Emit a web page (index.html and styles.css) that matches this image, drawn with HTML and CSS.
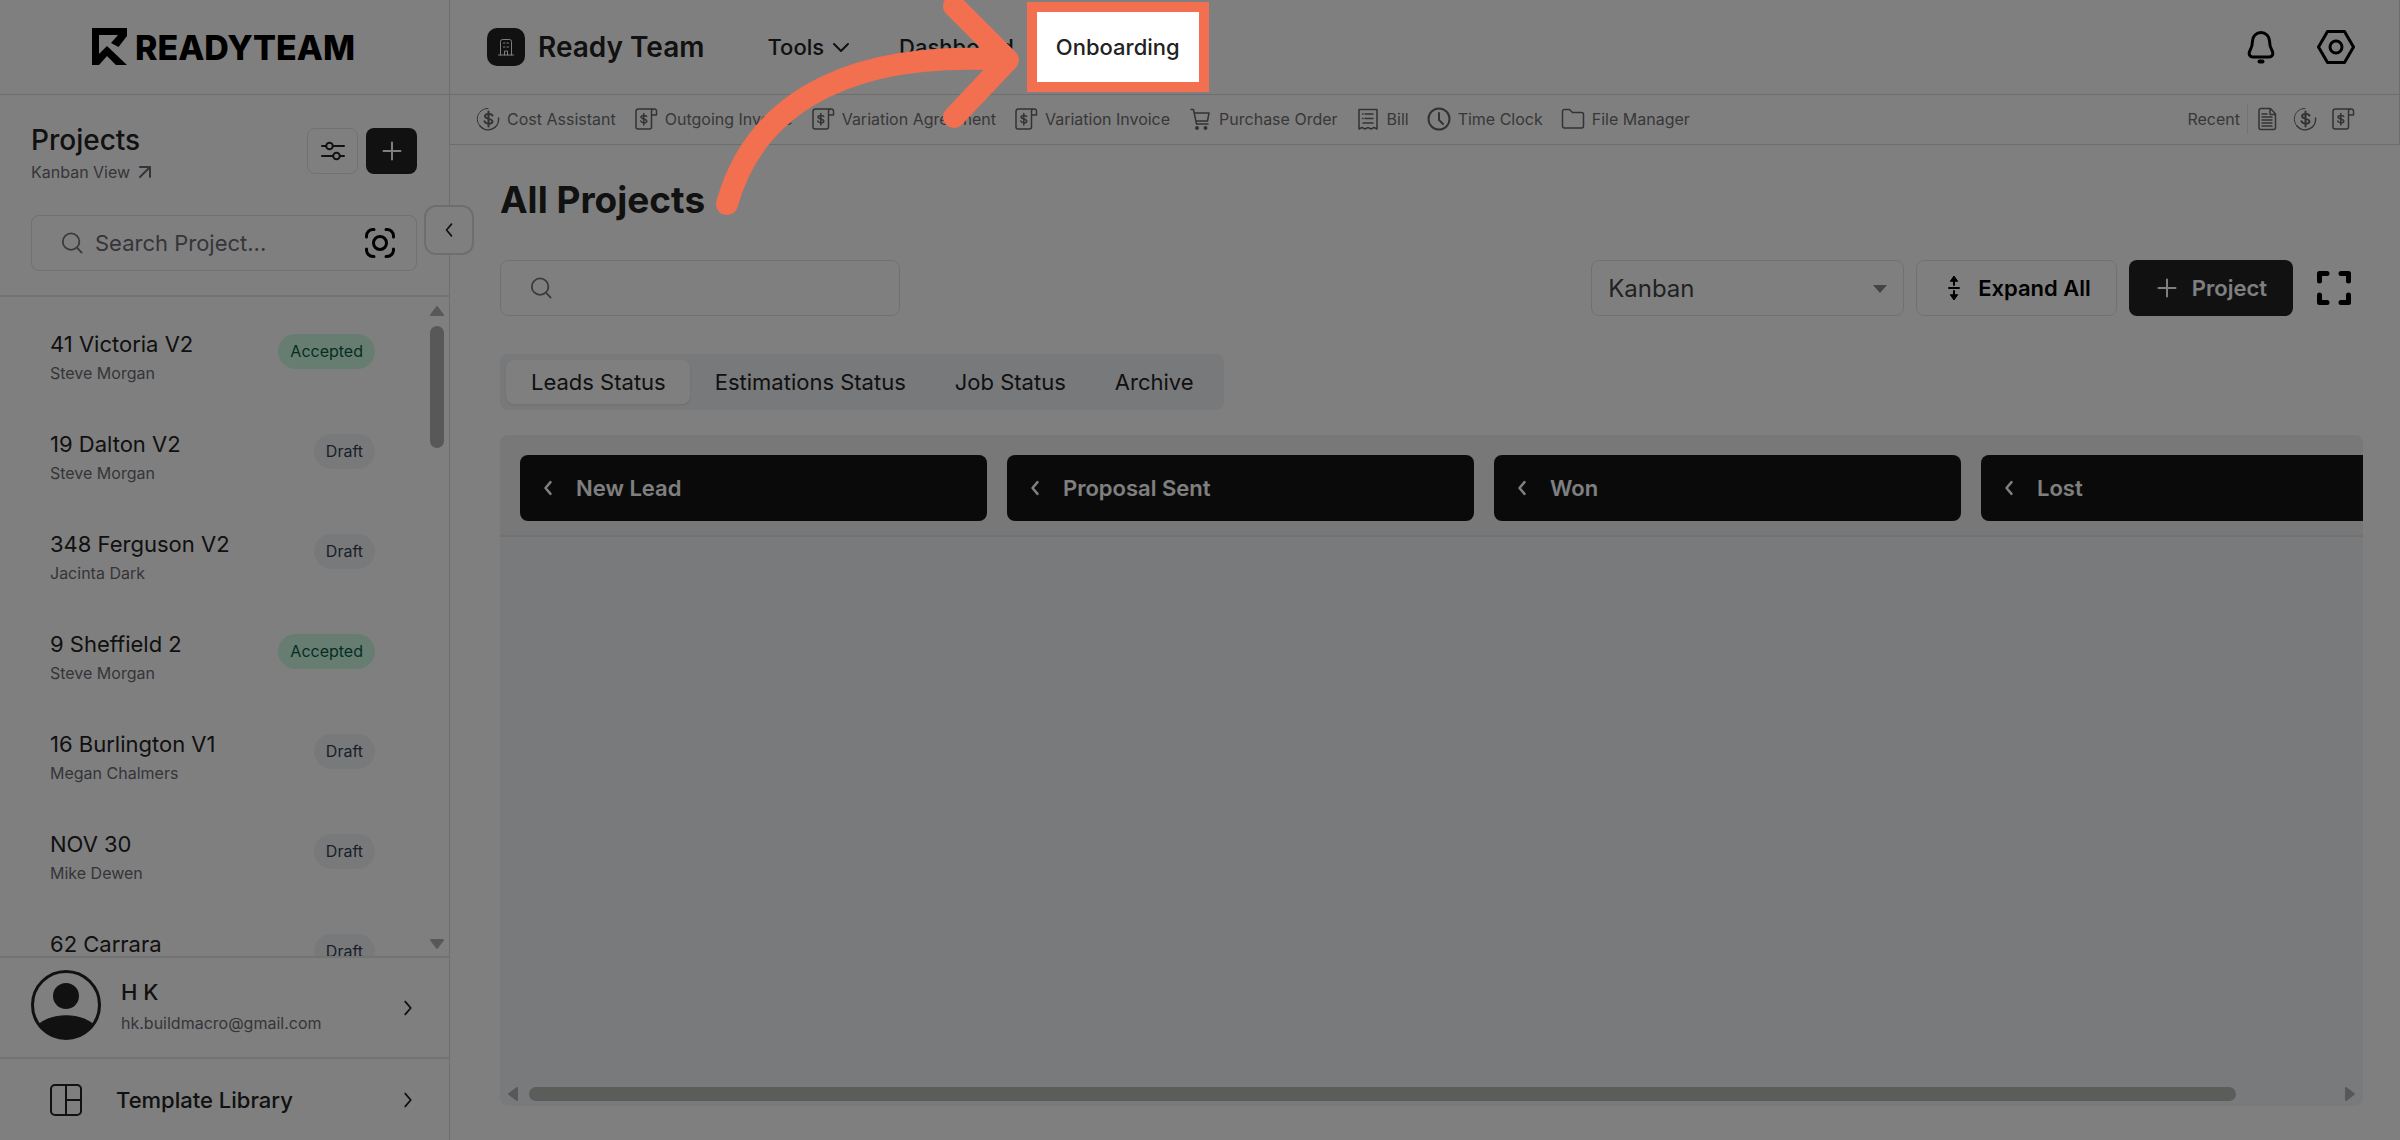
FILE: index.html
```html
<!DOCTYPE html>
<html lang="en">
<head>
  <meta charset="UTF-8" />
  <meta name="viewport" content="width=device-width, initial-scale=1.0"/>
  <title>Ready Team - All Projects</title>
  <link rel="stylesheet" href="styles.css">
</head>
<body>

  <!-- Shared icons -->
  <svg class="sprite" aria-hidden="true">
    <symbol id="i-search" viewBox="0 0 24 24"><circle cx="11" cy="10.500" r="9"/><path d="M17.500 17l5 5.500"/></symbol>
    <symbol id="i-plus" viewBox="0 0 24 24"><path d="M12 3.500v17M3.500 12h17"/></symbol>
    <symbol id="i-left" viewBox="0 0 24 24"><path d="M15 5l-6 7 6 7"/></symbol>
    <symbol id="i-right" viewBox="0 0 24 24"><path d="M9 5l6 7-6 7"/></symbol>
    <symbol id="i-cost" viewBox="0 0 24 24">
      <path d="M12 1.500A10.500 10.500 0 0 0 4 19" stroke-width="1" stroke-dasharray="4 1"/>
      <path d="M4 19a10.500 10.500 0 0 0 18.500-8"/>
      <path d="M12.500 4.500v15M16.500 8.500c-1-2-7.500-2.200-7.500.8 0 3.200 7.500 1.900 7.500 5.200 0 3-7 2.800-8-.2" stroke-width="2"/>
    </symbol>
    <symbol id="i-invoice" viewBox="0 0 24 24">
      <path d="M20 2H4.500A2.500 2.500 0 0 0 2 4.500V20a2 2 0 0 0 2 2h11.500a2 2 0 0 0 2-2V4.500A2.200 2.200 0 0 1 20 2a2 2 0 0 1 2.500 2v4h-5"/>
      <path d="M9.800 6.500v11.500M12.700 9.500c-.8-1.500-5.700-1.600-5.700.6 0 2.400 5.800 1.500 5.800 4.100 0 2.300-5.400 2.100-6.100-.3"/>
    </symbol>
  </svg>

  <div class="app">
    <aside class="sidebar">
      <div class="logo">
        <svg width="35" height="38" viewBox="0 0 35 38"><path d="M0 0H35V8L26.500 19 19 15 26 7H7V26L15 18 35 37H24L15 28 7 37H0Z" fill="#000"/></svg>
        <span>READYTEAM</span>
      </div>

      <div class="side-top">
        <div class="side-title">
          <div>
            <h2>Projects</h2>
            <a href="#" class="view-link">Kanban View
              <svg width="14" height="14" viewBox="0 0 14 14"><path d="M2 2h10v10M12 2L2 12"/></svg>
            </a>
          </div>
          <div class="side-actions">
            <button class="btn-filter" aria-label="Filter">
              <svg width="24" height="24" viewBox="0 0 24 24"><path d="M1 7h4M12 7h11M1 17h11M19 17h4"/><circle cx="8.500" cy="7" r="3.300"/><circle cx="15.500" cy="17" r="3.300"/></svg>
            </button>
            <button class="btn-add" aria-label="Add project"><svg width="24" height="24"><use href="#i-plus"/></svg></button>
          </div>
        </div>
        <div class="search side-search">
          <svg width="22" height="22" class="i-grey"><use href="#i-search"/></svg>
          <input type="text" placeholder="Search Project..." aria-label="Search project">
          <svg class="scan" width="30" height="30" viewBox="0 0 30 30"><path d="M1.500 9V8A6.500 6.500 0 0 1 8 1.500H9M21 1.500h1A6.500 6.500 0 0 1 28.500 8v1M28.500 21v1a6.500 6.500 0 0 1-6.500 6.500h-1M9 28.500H8A6.500 6.500 0 0 1 1.500 22v-1"/><circle cx="15" cy="15" r="6.500"/></svg>
        </div>
      </div>

      <button class="collapse" aria-label="Collapse sidebar"><svg width="20" height="20"><use href="#i-left"/></svg></button>

      <div class="list-wrap">
        <ul class="project-list">
          <li><div><h3>41 Victoria V2</h3><p>Steve Morgan</p></div><span class="badge accepted">Accepted</span></li>
          <li><div><h3>19 Dalton V2</h3><p>Steve Morgan</p></div><span class="badge">Draft</span></li>
          <li><div><h3>348 Ferguson V2</h3><p>Jacinta Dark</p></div><span class="badge">Draft</span></li>
          <li><div><h3>9 Sheffield 2</h3><p>Steve Morgan</p></div><span class="badge accepted">Accepted</span></li>
          <li><div><h3>16 Burlington V1</h3><p>Megan Chalmers</p></div><span class="badge">Draft</span></li>
          <li><div><h3>NOV 30</h3><p>Mike Dewen</p></div><span class="badge">Draft</span></li>
          <li><div><h3>62 Carrara</h3></div><span class="badge">Draft</span></li>
        </ul>
        <div class="vscroll">
          <svg width="16" height="12" viewBox="0 0 16 12"><path d="M8 2l6 8H2z"/></svg>
          <div class="vtrack"><div class="vthumb"></div></div>
          <svg width="16" height="12" viewBox="0 0 16 12"><path d="M8 10l6-8H2z"/></svg>
        </div>
      </div>

      <a href="#" class="user">
        <svg class="avatar" width="70" height="70" viewBox="0 0 70 70">
          <circle cx="35" cy="35" r="33.500" fill="none" stroke="#222" stroke-width="3"/>
          <circle cx="35" cy="26" r="13" fill="#222" stroke="none"/>
          <path d="M8 54C22 43 48 43 62 54A33.500 33.500 0 0 1 8 54Z" fill="#222" stroke="#222" stroke-width="1"/>
        </svg>
        <div class="user-info"><strong>H K</strong><span>hk.buildmacro@gmail.com</span></div>
        <svg width="22" height="22"><use href="#i-right"/></svg>
      </a>

      <a href="#" class="template">
        <svg width="34" height="34" viewBox="0 0 34 34"><rect x="2" y="2" width="30" height="30" rx="4"/><path d="M17 2v30M17 17h15"/></svg>
        <span>Template Library</span>
        <svg width="22" height="22"><use href="#i-right"/></svg>
      </a>
    </aside>

    <div class="main">
      <header class="topbar">
        <div class="brand">
          <span class="brand-icon">
            <svg width="18" height="18" viewBox="0 0 18 18"><path d="M1.500 17h15M3.500 17V3.500a2 2 0 0 1 2-2h7a2 2 0 0 1 2 2V17M7.500 17v-4h3v4M6.500 5h1.500M10 5h1.500M6.500 9h1.500M10 9h1.500"/></svg>
          </span>
          <h1>Ready Team</h1>
        </div>
        <nav>
          <button class="nav-item">Tools
            <svg width="18" height="18" viewBox="0 0 18 18"><path d="M2 6l7 7 7-7"/></svg>
          </button>
          <a href="#" class="nav-item">Dashboard</a>
          <a href="#" class="nav-item highlight">Onboarding
            <svg class="arrow" width="320" height="220" viewBox="0 0 320 220"><path d="M12 204C36 118 114 48 293 60M239 6L293 60L239 117"/></svg>
          </a>
        </nav>
        <div class="top-icons">
          <button aria-label="Notifications">
            <svg width="28" height="34" viewBox="0 0 28 34"><path d="M14 2.500a8.500 8.500 0 0 0-8.500 8.500c0 4.500-.8 6.500-2.500 9.500-2 3.800 0 6.500 3 6.500h16c3 0 5-2.700 3-6.500-1.700-3-2.500-5-2.500-9.500A8.500 8.500 0 0 0 14 2.500Z"/><path d="M12.500 31.500h3" stroke-width="4"/></svg>
          </button>
          <button aria-label="Settings">
            <svg width="38" height="34" viewBox="0 0 38 34"><path d="M10.500 1.500h17L36.500 17l-9 15.500h-17L1.500 17z"/><circle cx="19" cy="17" r="6"/></svg>
          </button>
        </div>
      </header>

      <div class="toolbar">
        <a href="#"><svg><use href="#i-cost"/></svg>Cost Assistant</a>
        <a href="#"><svg><use href="#i-invoice"/></svg>Outgoing Invoice</a>
        <a href="#"><svg><use href="#i-invoice"/></svg>Variation Agreement</a>
        <a href="#"><svg><use href="#i-invoice"/></svg>Variation Invoice</a>
        <a href="#"><svg viewBox="0 0 24 24"><path d="M3 2.500h2.500l3 14.500h11.500M6.500 6H21l-1.500 8H8"/><circle cx="9" cy="21" r="1.200" fill="#444"/><circle cx="17.500" cy="21" r="1.200" fill="#444"/></svg>Purchase Order</a>
        <a href="#"><svg viewBox="0 0 24 24"><path d="M3 22V2.500h18V22l-3-1.500L15 22l-3-1.500L9 22l-3-1.500zM9 7h8M6.500 7h.5M9 11.500h8M6.500 11.500h.5M7 16h10"/></svg>Bill</a>
        <a href="#"><svg class="clock" viewBox="0 0 24 24"><circle cx="12" cy="12" r="10.500"/><path d="M12 6v7l4 4"/></svg>Time Clock</a>
        <a href="#"><svg viewBox="0 0 24 24"><path d="M1.500 4.500a2 2 0 0 1 2-2h5l3 3h9a2 2 0 0 1 2 2v11.500a2 2 0 0 1-2 2h-17a2 2 0 0 1-2-2z"/></svg>File Manager</a>
        <div class="recent">
          <span>Recent</span>
          <a href="#" aria-label="Document"><svg viewBox="0 0 24 24"><path d="M6 1.500h9.500L20.500 7v13.500a2 2 0 0 1-2 2H6a2 2 0 0 1-2-2V3.500a2 2 0 0 1 2-2zM15 2v5.500h5M7 7h5M7 10h10M7 13h10M7 16h10M7 19h10"/></svg></a>
          <a href="#" aria-label="Cost Assistant"><svg><use href="#i-cost"/></svg></a>
          <a href="#" aria-label="Invoice"><svg><use href="#i-invoice"/></svg></a>
        </div>
      </div>

      <main class="content">
        <h2 class="page-title">All Projects</h2>

        <div class="controls">
          <div class="search main-search">
            <svg width="22" height="22" class="i-grey"><use href="#i-search"/></svg>
            <input type="text" aria-label="Search">
          </div>
          <div class="select-wrap">
            <select aria-label="View"><option>Kanban</option><option>List</option></select>
          </div>
          <button class="btn-expand">
            <svg width="24" height="26" viewBox="0 0 24 26"><path d="M7 13h10M12 10V3M12 16v7"/><path d="M8.500 6L12 1l3.500 5zM8.500 20l3.500 5 3.500-5z" fill="#000" stroke-width="1"/></svg>
            Expand All
          </button>
          <button class="btn-project"><svg width="24" height="24"><use href="#i-plus"/></svg>Project</button>
          <button class="btn-full" aria-label="Full screen">
            <svg width="34" height="34" viewBox="0 0 34 34"><path d="M2.500 10V2.500H10M24 2.500h7.500V10M31.500 24v7.500H24M10 31.500H2.500V24"/></svg>
          </button>
        </div>

        <div class="tabs">
          <button class="active">Leads Status</button>
          <button>Estimations Status</button>
          <button>Job Status</button>
          <button>Archive</button>
        </div>

        <section class="board">
          <div class="board-head">
            <div class="column"><svg width="20" height="20"><use href="#i-left"/></svg>New Lead</div>
            <div class="column"><svg width="20" height="20"><use href="#i-left"/></svg>Proposal Sent</div>
            <div class="column"><svg width="20" height="20"><use href="#i-left"/></svg>Won</div>
            <div class="column"><svg width="20" height="20"><use href="#i-left"/></svg>Lost</div>
          </div>
          <div class="board-body"></div>
          <div class="hscroll">
            <svg width="12" height="16" viewBox="0 0 12 16"><path d="M2 8l8-6v12z"/></svg>
            <div class="htrack"><div class="hthumb"></div></div>
            <svg width="12" height="16" viewBox="0 0 12 16"><path d="M10 8L2 2v12z"/></svg>
          </div>
        </section>
      </main>
    </div>
  </div>

</body>
</html>
```
FILE: styles.css
```css
* {
  box-sizing: border-box;
}

body {
  margin: 0;
  background: #fff;
  color: #222;
  font-family: Inter, "Liberation Sans", sans-serif;
  font-size: 22px;
  overflow: hidden;
}

h1, h2, h3, p, ul {
  margin: 0;
  padding: 0;
}

a {
  color: inherit;
  text-decoration: none;
}

button, input, select {
  font: inherit;
  color: inherit;
  background: none;
  border: none;
  padding: 0;
}

svg {
  display: block;
  flex: none;
  fill: none;
  stroke: currentColor;
  stroke-width: 2;
  stroke-linecap: round;
  stroke-linejoin: round;
}

.sprite {
  position: absolute;
  width: 0;
  height: 0;
}

.app {
  display: flex;
  height: 100vh;
}

/* Sidebar */
.sidebar {
  position: relative;
  display: flex;
  flex-direction: column;
  flex: none;
  width: 450px;
  border-right: 1px solid #dcdcdc;
}

.logo {
  display: flex;
  flex: none;
  align-items: center;
  justify-content: center;
  gap: 8px;
  height: 95px;
  padding-right: 2px;
  border-bottom: 1px solid #dcdcdc;
  color: #000;
  font-size: 34px;
  font-weight: 800;
}

.logo svg {
  stroke: none;
}

.side-top {
  flex: none;
  padding: 28px 32px 24px 31px;
  border-bottom: 2px solid #e6e6e6;
}

.side-title {
  display: flex;
  justify-content: space-between;
  height: 92px;
}

.side-title h2 {
  font-size: 28px;
  font-weight: 500;
  line-height: 34px;
}

.view-link {
  display: flex;
  align-items: center;
  gap: 8px;
  margin-top: 3px;
  font-size: 16px;
  line-height: 24px;
  color: #6b6b73;
}

.side-actions {
  display: flex;
  gap: 8px;
  padding-top: 5px;
}

.side-actions button {
  display: flex;
  align-items: center;
  justify-content: center;
  width: 51px;
  height: 46px;
  border-radius: 8px;
}

.side-actions .btn-filter {
  border: 1px solid #e2e2e2;
}

.side-actions .btn-add,
.btn-project {
  background: #222;
  color: #fff;
}

.search {
  display: flex;
  align-items: center;
  gap: 12px;
  height: 56px;
  border: 1px solid #e2e2e2;
  border-radius: 8px;
  padding: 0 21px 0 29px;
}

.search input {
  flex: 1;
  min-width: 0;
  outline: none;
}

.search input::placeholder {
  color: #6b6b73;
  opacity: 1;
}

.i-grey {
  color: #777;
}

.scan {
  color: #000;
  stroke-width: 3;
}

.collapse {
  position: absolute;
  top: 205px;
  right: -25px;
  z-index: 5;
  display: flex;
  align-items: center;
  justify-content: center;
  width: 50px;
  height: 50px;
  background: #fff;
  border: 2px solid #dcdcdc;
  border-radius: 12px;
}

.list-wrap {
  display: flex;
  flex: 1;
  min-height: 0;
  overflow: hidden;
}

.project-list {
  flex: 1;
  list-style: none;
  padding: 32px 54px 0 50px;
}

.project-list li {
  display: flex;
  align-items: flex-start;
  justify-content: space-between;
  height: 100px;
}

.project-list h3 {
  font-size: 22px;
  font-weight: 400;
  line-height: 30px;
}

.project-list p {
  font-size: 16px;
  line-height: 28px;
  color: #6b6b73;
}

.badge {
  margin-top: 5px;
  padding: 0 12px;
  border-radius: 18px;
  background: #f1f3f6;
  color: #374151;
  font-size: 16px;
  line-height: 35px;
}

.badge.accepted {
  background: #d1fae5;
  color: #065f46;
}

.vscroll {
  display: flex;
  flex-direction: column;
  align-items: center;
  width: 16px;
  margin: 8px 4px 6px 0;
}

.vscroll svg,
.hscroll svg {
  fill: #b0b0b0;
  stroke: #b0b0b0;
}

.vtrack {
  flex: 1;
  padding-top: 9px;
}

.vthumb {
  width: 14px;
  height: 122px;
  border-radius: 7px;
  background: #b0b0b0;
}

.user,
.template {
  display: flex;
  flex: none;
  align-items: center;
  border-top: 2px solid #e6e6e6;
  padding-right: 30px;
}

.user {
  height: 101px;
  padding-left: 31px;
  gap: 20px;
}

.avatar {
  margin-bottom: 6px;
}

.user-info {
  flex: 1;
  margin-bottom: 2px;
}

.user-info strong {
  display: block;
  font-weight: 500;
  line-height: 32px;
}

.user-info span {
  display: block;
  font-size: 16px;
  line-height: 30px;
  color: #6b6b73;
}

.template {
  height: 83px;
  padding-left: 49px;
  gap: 33px;
  font-weight: 500;
}

.template span {
  flex: 1;
}

/* Main area */
.main {
  display: flex;
  flex: 1;
  flex-direction: column;
  min-width: 0;
}

.topbar {
  display: flex;
  flex: none;
  align-items: center;
  height: 95px;
  padding: 0 44px 0 37px;
  border-right: 1px solid #dcdcdc;
  border-bottom: 1px solid #dcdcdc;
}

.brand {
  display: flex;
  align-items: center;
  gap: 13px;
}

.brand h1 {
  font-size: 28px;
  font-weight: 600;
  line-height: 34px;
}

.brand-icon {
  display: flex;
  align-items: center;
  justify-content: center;
  width: 38px;
  height: 38px;
  border-radius: 10px;
  background: #222;
  color: #fff;
}

.brand-icon svg {
  stroke-width: 1;
}

nav {
  display: flex;
  flex: 1;
  gap: 42px;
  padding-left: 63px;
}

.nav-item {
  display: flex;
  align-items: center;
  gap: 8px;
  font-weight: 500;
  line-height: 30px;
}

button.nav-item {
  padding-right: 7px;
}

/* Tour step: dims the page round the highlighted item */
.highlight {
  position: relative;
}

.highlight::after {
  content: "";
  position: absolute;
  inset: -30px -29px;
  z-index: 50;
  border: 10px solid #f26f50;
  box-shadow: 0 0 0 9999px rgba(0, 0, 0, 0.5);
  pointer-events: none;
}

.arrow {
  position: absolute;
  top: -32px;
  left: -341px;
  z-index: 60;
  color: #f26f50;
  stroke-width: 22;
  pointer-events: none;
}

.top-icons {
  display: flex;
  gap: 42px;
  color: #000;
}

.top-icons svg {
  stroke-width: 3;
}

.toolbar {
  display: flex;
  flex: none;
  align-items: center;
  gap: 18px;
  height: 50px;
  padding: 0 44px 2px 26px;
  border-right: 1px solid #dcdcdc;
  border-bottom: 1px solid #dcdcdc;
  color: #707070;
  font-size: 16px;
}

.toolbar a {
  display: flex;
  align-items: center;
  gap: 7px;
}

.toolbar svg {
  width: 24px;
  height: 24px;
  color: #666;
  stroke-width: 1.5;
}

.toolbar .clock {
  stroke-width: 2;
}

.recent {
  display: flex;
  align-items: center;
  gap: 14px;
  margin-left: auto;
}

.recent span {
  padding-right: 7px;
  margin-right: -7px;
  border-right: 1px solid #e6e6e6;
  line-height: 30px;
}

.content {
  display: flex;
  flex: 1;
  flex-direction: column;
  min-height: 0;
  padding: 33px 37px 34px 50px;
}

.page-title {
  font-size: 37px;
  font-weight: 700;
  line-height: 44px;
}

.controls {
  display: flex;
  align-items: center;
  gap: 12px;
  margin-top: 38px;
  padding-right: 12px;
}

.main-search {
  width: 400px;
  margin-right: auto;
}

.select-wrap {
  position: relative;
  width: 313px;
}

.select-wrap select {
  appearance: none;
  width: 100%;
  height: 56px;
  padding: 0 16px;
  border: 1px solid #e2e2e2;
  border-radius: 8px;
  font-size: 24px;
  color: #444;
}

.select-wrap::after {
  content: "";
  position: absolute;
  top: 25px;
  right: 17px;
  border: 7px solid transparent;
  border-top: 8px solid #888;
  border-bottom: none;
}

.btn-expand,
.btn-project {
  display: flex;
  align-items: center;
  height: 56px;
  border-radius: 8px;
  font-weight: 600;
}

.btn-expand {
  gap: 12px;
  padding: 0 25px;
  border: 1px solid #e2e2e2;
  color: #000;
}

.btn-project {
  gap: 13px;
  padding: 0 26px;
}

.btn-full {
  margin-left: 12px;
  color: #000;
}

.btn-full svg {
  stroke-width: 5;
}

.tabs {
  display: flex;
  align-self: flex-start;
  margin-top: 38px;
  padding: 6px;
  border-radius: 8px;
  background: #f1f3f6;
}

.tabs button {
  height: 44px;
  padding: 0 24px 0 25px;
  border-radius: 8px;
}

.tabs .active {
  background: #fff;
  box-shadow: 0 1px 3px rgba(0, 0, 0, 0.1);
}

.board {
  display: flex;
  flex: 1;
  flex-direction: column;
  min-height: 0;
  margin-top: 25px;
  border-radius: 8px;
  background: #f2f4f7;
  overflow: hidden;
}

.board-head {
  display: flex;
  flex: none;
  gap: 20px;
  padding: 20px 0 14px 20px;
  background: #f0f0f0;
  border-bottom: 2px solid #e4e4e4;
}

.column {
  display: flex;
  flex: none;
  align-items: center;
  gap: 18px;
  width: 467px;
  height: 66px;
  padding-left: 18px;
  border-radius: 8px;
  background: #151515;
  color: #fff;
  font-weight: 600;
}

.column svg {
  stroke-width: 3;
}

.board-body {
  flex: 1;
}

.hscroll {
  display: flex;
  align-items: center;
  gap: 10px;
  height: 16px;
  margin: 0 7px 4px;
}

.htrack {
  flex: 1;
  padding-right: 98px;
}

.hthumb {
  height: 14px;
  border-radius: 7px;
  background: #b6bab7;
}
```
